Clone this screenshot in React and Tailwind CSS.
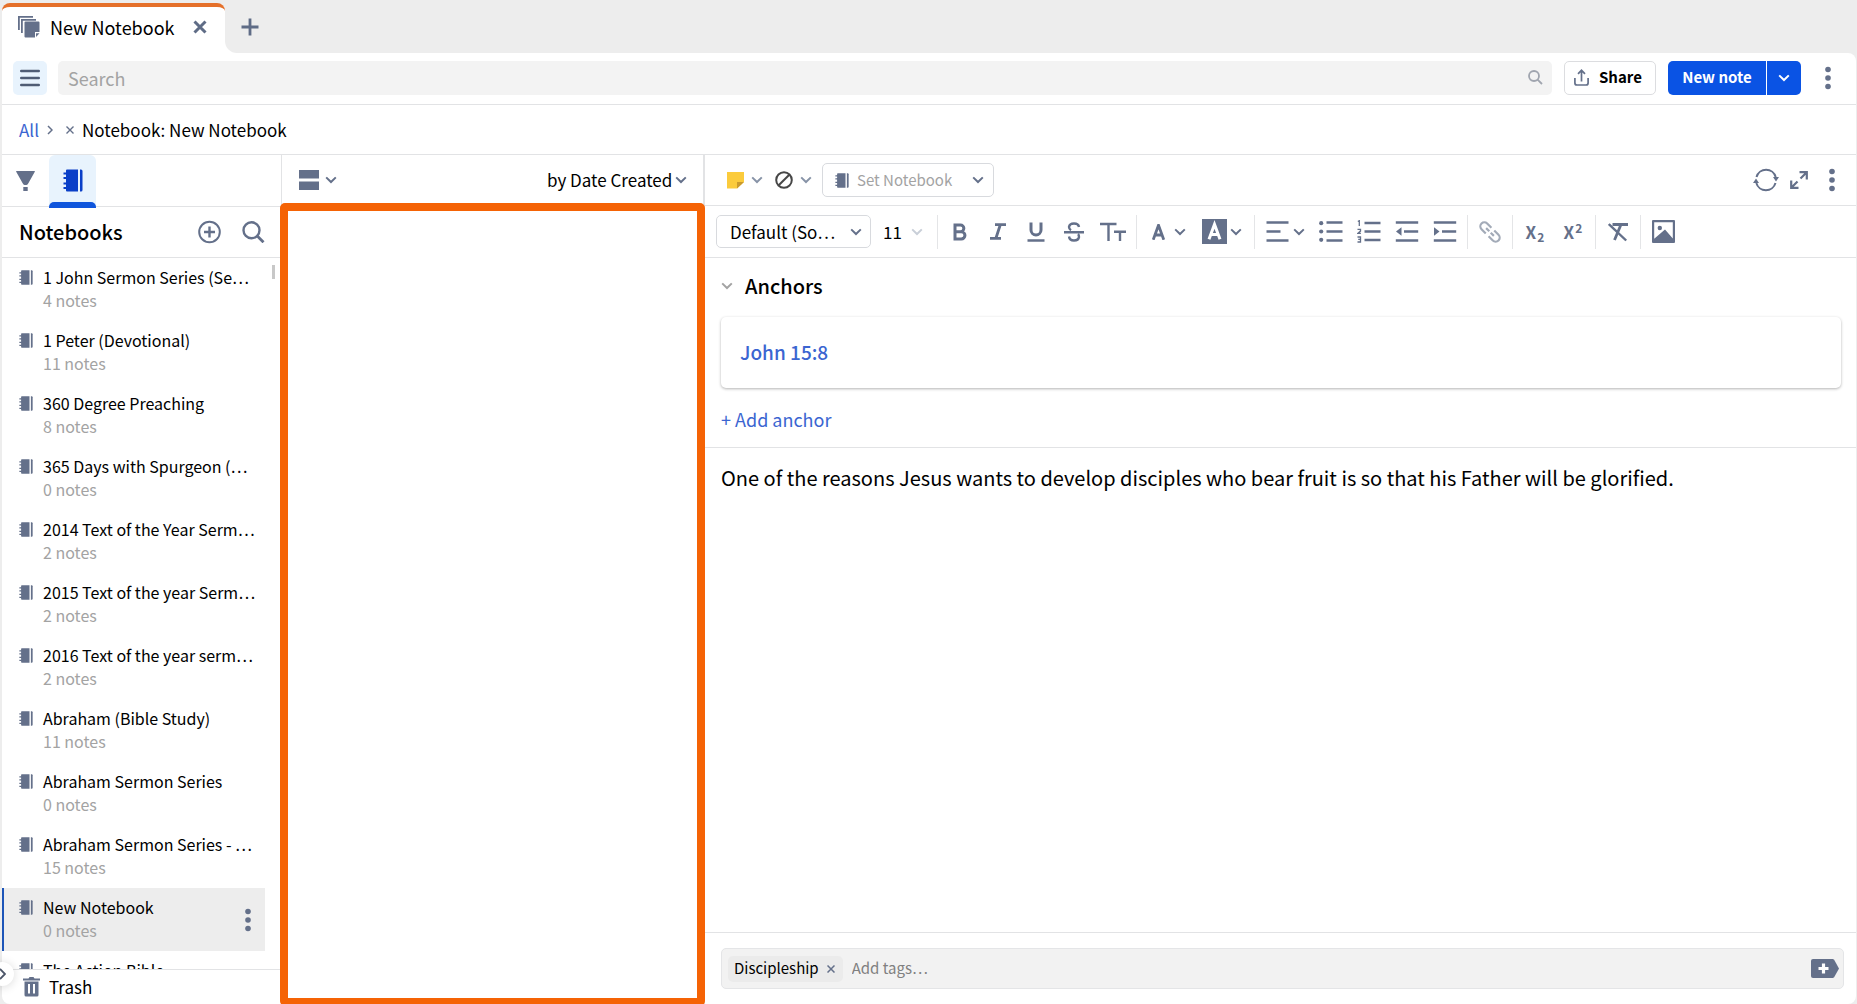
import React from "react";

const NOTEBOOKS = [
  { name: "1 John Sermon Series (Se…", count: "4 notes" },
  { name: "1 Peter (Devotional)", count: "11 notes" },
  { name: "360 Degree Preaching", count: "8 notes" },
  { name: "365 Days with Spurgeon (…", count: "0 notes" },
  { name: "2014 Text of the Year Serm…", count: "2 notes" },
  { name: "2015 Text of the year Serm…", count: "2 notes" },
  { name: "2016 Text of the year serm…", count: "2 notes" },
  { name: "Abraham (Bible Study)", count: "11 notes" },
  { name: "Abraham Sermon Series", count: "0 notes" },
  { name: "Abraham Sermon Series - …", count: "15 notes" },
  { name: "New Notebook", count: "0 notes", selected: true },
  { name: "The Action Bible" },
];

function Chevron({ className = "text-[#64708a]" }) {
  return (
    <svg width="12" height="8" viewBox="0 0 12 8" fill="none" stroke="currentColor" strokeWidth="2" className={"shrink-0 " + className} aria-hidden="true">
      <path d="M1.2 1.4 6 6l4.800-4.600" />
    </svg>
  );
}

function Dots() {
  return (
    <svg width="6" height="24" viewBox="0 0 6 24" fill="#64708a" aria-hidden="true">
      <circle cx="3" cy="3.500" r="2.800" />
      <circle cx="3" cy="12" r="2.800" />
      <circle cx="3" cy="20.500" r="2.800" />
    </svg>
  );
}

function NotebookIcon({ className = "w-[14px] h-[15px] text-[#64708a]" }) {
  return (
    <svg viewBox="0 0 20 23" preserveAspectRatio="none" className={"shrink-0 " + className} fill="currentColor" aria-hidden="true">
      <path d="M3 1.500Q3 .5 4 .5H15V22.500H4Q3 22.500 3 21.500V20H.5V18H3V15.500H.5V13.500H3V10H.5V8H3V5.500H.5V3.500H3Z" />
      <path d="M17 .5h1q1.500 0 1.500 1.500v19q0 1.500-1.500 1.500h-1Z" />
    </svg>
  );
}

function Divider() {
  return <span className="mx-[3px] h-[34px] w-px shrink-0 bg-[#e4e5e7]" />;
}

function Tool({ label, className = "w-[38px]", children }) {
  return (
    <button type="button" aria-label={label} className={"flex h-[34px] shrink-0 items-center justify-center text-[#64708a] " + className}>
      {children}
    </button>
  );
}

function Icon({ children, w = 24, h = 24 }) {
  return (
    <svg width={w} height={h} viewBox={`0 0 ${w} ${h}`} fill="none" stroke="currentColor" strokeWidth="2.400" aria-hidden="true">
      {children}
    </svg>
  );
}

function TabBar() {
  return (
    <div className="flex h-[53px] shrink-0 bg-[#ededed] pt-[3px]">
      <div className="flex w-[223px] shrink-0 items-center rounded-t-[8px] border-t-4 border-[#e5702a] bg-white pb-[6px] pl-4">
        <svg width="22" height="22" viewBox="0 0 22 22" fill="#64708a" aria-hidden="true">
          <path d="M0 0h15v1.800H1.800V14H0Z" />
          <path d="M3 3h15v1.800H4.800V17H3Z" />
          <path d="M6.500 6.500q0-1 1-1H20.500q1 0 1 1V16h-4.500v5.500H7.500q-1 0-1-1Z" />
          <path d="M18 17.200h3.500L18 21Z" />
        </svg>
        <span className="ml-[10px] text-[18px] leading-6 text-black">New Notebook</span>
        <button type="button" aria-label="Close tab" className="ml-[18px] flex text-[#5f6c86]">
          <Icon w={14} h={14}><path strokeWidth="3" d="m1.500 1.500 11 11m0-11-11 11" /></Icon>
        </button>
      </div>
      <div className="-mt-[3px] flex flex-1 bg-white">
        <div className="flex flex-1 items-center rounded-bl-[12px] bg-[#ededed] pl-4">
          <button type="button" aria-label="New tab" className="text-[#5f6c86]">
            <Icon w={18} h={18}><path strokeWidth="2.800" d="M9 .5v17M.5 9h17" /></Icon>
          </button>
        </div>
      </div>
    </div>
  );
}

function TopBar() {
  return (
    <div className="flex h-[52px] shrink-0 items-center rounded-tr-[8px] border-b border-[#e2e3e5] bg-white pb-[2px] pl-[11px] pr-[25px]">
      <button type="button" aria-label="Menu" className="flex size-[34px] items-center justify-center rounded-[5px] bg-[#e8f3fd] text-[#4f5c74]">
        <Icon w={20} h={18}><path strokeLinecap="round" d="M1.200 2h17.600M1.200 9h17.600M1.200 16h17.600" /></Icon>
      </button>
      <div className="ml-[11px] flex h-[34px] flex-1 items-center rounded-[5px] bg-[#f3f3f3] pl-[10px] pr-[9px]">
        <input aria-label="Search" placeholder="Search" className="h-full min-w-0 flex-1 bg-transparent text-[18px] text-black outline-none placeholder:text-[#a3a3a3]" />
        <svg width="15" height="15" viewBox="0 0 15 15" fill="none" stroke="#a0a5af" strokeWidth="1.800" aria-hidden="true">
          <circle cx="6" cy="6" r="5" /><path d="m9.600 9.600 4.400 4.400" />
        </svg>
      </div>
      <button type="button" className="ml-3 flex h-[34px] w-[92px] items-center rounded-[5px] border border-[#dcdde0] pl-[9px] text-[15px] font-bold text-black">
        <svg width="15" height="17" viewBox="0 0 15 17" fill="none" stroke="#64708a" strokeWidth="1.700" aria-hidden="true">
          <path d="M7.500 12.500V1.500M4 4.800l3.500-3.500L11 4.800M.9 9v5q0 2 2 2h9.200q2 0 2-2V9" />
        </svg>
        <span className="ml-[10px]">Share</span>
      </button>
      <button type="button" className="ml-3 h-[34px] w-[98px] rounded-l-[5px] bg-[#0a53e4] text-[15px] font-bold text-white">New note</button>
      <button type="button" aria-label="More note types" className="ml-px flex h-[34px] w-[34px] items-center justify-center rounded-r-[5px] bg-[#0a53e4]">
        <Chevron className="text-white" />
      </button>
      <button type="button" aria-label="More options" className="ml-6"><Dots /></button>
    </div>
  );
}

function Breadcrumb() {
  return (
    <nav className="flex h-[50px] shrink-0 items-center border-b border-[#e2e3e5] bg-white pl-[17px] text-[17px]">
      <a href="#all" className="text-[#3b65d1]">All</a>
      <svg width="6" height="10" viewBox="0 0 6 10" fill="none" stroke="#64708a" strokeWidth="1.500" className="ml-2" aria-hidden="true"><path d="m1 1 4 4-4 4" /></svg>
      <button type="button" aria-label="Remove filter" className="ml-[13px]">
        <svg width="8" height="8" viewBox="0 0 8 8" fill="none" stroke="#64708a" strokeWidth="1.400" aria-hidden="true"><path d="m.5.5 7 7m0-7-7 7" /></svg>
      </button>
      <span className="ml-2 text-black">Notebook: New Notebook</span>
    </nav>
  );
}

function Sidebar() {
  return (
    <aside className="flex w-[280px] shrink-0 flex-col border-r border-[#e2e3e5]">
      <div className="flex h-[52px] shrink-0 border-b border-[#e2e3e5]">
        <button type="button" aria-label="Filters" className="flex w-[47px] items-center pl-[14px]">
          <svg width="19" height="20" viewBox="0 0 19 20" fill="#64708a" aria-hidden="true">
            <path d="M.6 0h17.800q.8 0 .4.800L12.500 12q-1 2-2 2h-2q-1 0-2-2L.2.800Q-.2 0 .6 0Z" /><rect x="7.300" y="16" width="4.400" height="4" />
          </svg>
        </button>
        <button type="button" aria-label="Notebooks" className="relative flex h-[53px] w-[47px] items-center justify-center rounded-t-[6px] bg-[#e8f3fd]">
          <NotebookIcon className="mb-[2px] h-[23px] w-[20px] text-[#0a3fc8]" />
          <span className="absolute inset-x-0 bottom-0 h-[6px] rounded-t-[5px] bg-[#0f55dc]" />
        </button>
      </div>
      <div className="flex h-[51px] shrink-0 items-center border-b border-[#e2e3e5] pl-[17px] pr-4">
        <h2 className="flex-1 text-[20px] font-medium text-black">Notebooks</h2>
        <button type="button" aria-label="Add notebook" className="text-[#64708a]">
          <Icon w={23} h={24}><circle cx="11.500" cy="12" r="10.300" strokeWidth="2" /><path d="M11.500 6.500v11M6 12h11" /></Icon>
        </button>
        <button type="button" aria-label="Search notebooks" className="ml-[21px] text-[#64708a]">
          <Icon w={23} h={22}><circle cx="9.500" cy="9.300" r="8" /><path d="m15.300 15.100 6.200 6.200" strokeWidth="2.800" /></Icon>
        </button>
      </div>
      <div className="flex min-h-0 flex-1 overflow-hidden">
        <ul className="min-w-0 flex-1">
          {NOTEBOOKS.map((n) => (
            <li key={n.name} className={"flex h-[63px] items-start " + (n.selected ? "border-l-2 border-[#1d55b8] bg-[#ededed] pl-[15px]" : "pl-[17px]")}>
              <NotebookIcon className="mt-3 h-[15px] w-[14px] text-[#64708a]" />
              <a href="#notebook" className="ml-[10px] mt-[7px] block min-w-0 flex-1">
                <span className="block whitespace-nowrap text-[16px] leading-6 text-black">{n.name}</span>
                <span className="block text-[16px] leading-[23px] text-[#a3a3a3]">{n.count}</span>
              </a>
              {n.selected && (
                <button type="button" aria-label="Notebook options" className="mr-[14px] self-center"><Dots /></button>
              )}
            </li>
          ))}
        </ul>
        <div className="w-[16px] shrink-0 pl-[7px] pt-[7px]"><div className="h-[14px] w-[3px] bg-[#c8c8c8]" /></div>
      </div>
      <a href="#trash" className="flex h-[35px] shrink-0 items-center border-t border-[#e2e3e5] pl-[21px] text-[17px] text-black">
        <svg width="17" height="20" viewBox="0 0 17 20" fill="#64708a" aria-hidden="true">
          <path fillRule="evenodd" d="M0 2.500V1.500h5.500L6.500 0h4l1 1.500H17v2H0ZM1.500 4.500h14V18q0 1.500-1.500 1.500H3Q1.500 19.500 1.500 18ZM5 7v9.500h2V7ZM10 7v9.500h2V7Z" />
        </svg>
        <span className="ml-[9px]">Trash</span>
      </a>
    </aside>
  );
}

function ResultsColumn() {
  return (
    <section className="relative flex w-[423px] shrink-0 flex-col border-r-2 border-[#e2e3e5]">
      <div className="flex h-[49px] shrink-0 items-center pl-[17px] pr-4">
        <button type="button" aria-label="View" className="flex items-center gap-[6px]">
          <svg width="20" height="20" viewBox="0 0 20 20" fill="#64708a" aria-hidden="true"><path d="M0 0h20v8.500H0zM0 11.500h20V20H0z" /></svg>
          <Chevron />
        </button>
        <div className="relative ml-auto flex items-center">
          <select aria-label="Sort order" className="appearance-none bg-transparent pr-[14px] text-[17px] text-black outline-none">
            <option>by Date Created</option>
          </select>
          <span className="pointer-events-none absolute right-0"><Chevron /></span>
        </div>
      </div>
      <div className="absolute -bottom-[2px] -left-[2px] -right-[2px] top-12 rounded-[5px] border-8 border-[#f56305] bg-white" />
    </section>
  );
}

function NoteBar() {
  return (
    <div className="flex h-[51px] shrink-0 items-center border-b border-[#e2e3e5] pl-[22px] pr-[21px]">
      <button type="button" aria-label="Note style" className="flex items-center gap-[7px]">
        <svg width="17" height="17" viewBox="0 0 17 17" aria-hidden="true">
          <path d="M0 0h17v10l-7 6.500H0Z" fill="#fbcb3c" /><path d="M10 10h7l-7 6.500Z" fill="#c99a2e" />
        </svg>
        <Chevron className="text-[#8793a7]" />
      </button>
      <button type="button" aria-label="Highlight" className="ml-3 flex items-center gap-[7px] text-[#474747]">
        <Icon w={18} h={18}><circle cx="9" cy="9" r="7.800" strokeWidth="2" /><path d="m3.700 14.300 10.600-10.600" strokeWidth="2" /></Icon>
        <Chevron className="text-[#8793a7]" />
      </button>
      <div className="relative ml-[10px] flex h-[34px] w-[172px] items-center">
        <span className="pointer-events-none absolute left-[13px]"><NotebookIcon /></span>
        <select aria-label="Set Notebook" className="h-full w-full appearance-none rounded-[5px] border border-[#d8dade] bg-transparent pl-[34px] text-[15px] text-[#a3a3a3] outline-none">
          <option>Set Notebook</option>
        </select>
        <span className="pointer-events-none absolute right-[10px] flex"><Chevron /></span>
      </div>
      <button type="button" aria-label="Sync" className="ml-auto text-[#64708a]">
        <Icon w={26} h={24}>
          <path strokeWidth="2" d="M3.500 9A10 10 0 0 1 22.700 9M22.500 15A10 10 0 0 1 3.300 15" />
          <path stroke="none" fill="currentColor" d="M20 9h6l-3 4.500ZM0 15h6l-3-4.500Z" />
        </Icon>
      </button>
      <button type="button" aria-label="Expand" className="ml-[11px] text-[#64708a]">
        <Icon w={18} h={18}><path d="M9.500 1.200h7.300v7.300M16.500 1.500l-6 6M1.200 9.500v7.300h7.300M1.500 16.500l6-6" strokeWidth="2.200" /></Icon>
      </button>
      <button type="button" aria-label="Note options" className="ml-[21px]"><Dots /></button>
    </div>
  );
}

function FormatBar() {
  return (
    <div className="flex h-[52px] shrink-0 items-center border-b border-[#e2e3e5] pl-[11px]">
      <div className="relative flex h-[33px] w-[155px] shrink-0 items-center">
        <select aria-label="Font" className="h-full w-full appearance-none rounded-[5px] border border-[#d8dade] bg-transparent pl-[13px] text-[17px] text-black outline-none">
          <option>Default (So…</option>
        </select>
        <span className="pointer-events-none absolute right-[9px] flex"><Chevron /></span>
      </div>
      <div className="relative ml-3 flex h-[33px] w-[40px] shrink-0 items-center">
        <select aria-label="Font size" className="h-full w-full appearance-none bg-transparent text-[17px] text-black outline-none"><option>11</option></select>
        <span className="pointer-events-none absolute right-0 flex"><Chevron className="text-[#c9cfd8]" /></span>
      </div>
      <span className="w-[11px]" />
      <Divider />
      <Tool label="Bold"><Icon w={14} h={18}><path strokeWidth="3" d="M2 2h5.500a3.300 3.300 0 0 1 0 6.700H2M2 8.700h6.300a3.600 3.600 0 0 1 0 7.300H2V.5" /></Icon></Tool>
      <Tool label="Italic"><Icon w={16} h={17}><path strokeWidth="2.800" d="M5 1.700h11M0 15.300h11M10.200 2 6 15" /></Icon></Tool>
      <Tool label="Underline"><Icon w={18} h={20}><path strokeWidth="3" d="M4 .5v7.500a5 5 0 0 0 10 0V.5" /><path d="M.5 18.500h17" /></Icon></Tool>
      <Tool label="Strikethrough"><Icon w={20} h={20}><path d="M15 5Q14.500 1.500 10 1.500T5 5q0 2 2 3.200M5 14.500q.5 4 5 4t5-3.500q0-1.800-1-2.800M0 10.200h20" /></Icon></Tool>
      <Tool label="Text size" className="w-10"><Icon w={26} h={20}><path d="M0 2h16.500M8.500 2v17M14 9.700h12M20 9.700V19" /></Icon></Tool>
      <Divider />
      <Tool label="Text color" className="w-[57px] gap-[9px]"><Icon w={13} h={16}><path strokeWidth="2.800" d="M1.200 15.800 6.500 1.200l5.300 14.600M3 11h7" /></Icon><Chevron /></Tool>
      <Tool label="Highlight color" className="mr-[5px] w-[49px] gap-[3px]">
        <svg width="25" height="25" viewBox="0 0 25 25" aria-hidden="true"><path fill="#64708a" d="M0 0h25v25H0z" /><path fill="none" stroke="#fff" strokeWidth="3" d="m7 20.200 5.500-14.800L18 20.200M9 15.500h7" /></svg>
        <Chevron />
      </Tool>
      <Divider />
      <Tool label="Alignment" className="w-[54px] gap-1"><Icon w={23} h={21}><path d="M.5 1.500h22M.5 10.500h14M.5 19.500h22" /></Icon><Chevron /></Tool>
      <Tool label="Bulleted list"><Icon w={24} h={21}><path d="M7.500 1.500H23.500M7.500 10.500H23.500M7.500 19.500H23.500" /><g fill="currentColor" stroke="none"><circle cx="2.200" cy="2.200" r="2.100" /><circle cx="2.200" cy="10.500" r="2.100" /><circle cx="2.200" cy="18.800" r="2.100" /></g></Icon></Tool>
      <Tool label="Numbered list"><Icon w={24} h={23}><path d="M7.500 3H23.500M7.500 11.500H23.500M7.500 20H23.500" /><path strokeWidth="1.300" d="M.8 1.500l1.500-.8V6M.5 9.300h3v1.800l-2.600 2.300h3M.5 17h3v5h-3M1.200 19.400h2.300" /></Icon></Tool>
      <Tool label="Decrease indent"><Icon w={24} h={21}><path d="M.8 1.500h22.400M9 10.500h14.200M.8 19.500h22.400" /><path stroke="none" fill="currentColor" d="M6.500 6.300v8.400L1 10.500Z" /></Icon></Tool>
      <Tool label="Increase indent"><Icon w={24} h={21}><path d="M.8 1.500h22.400M9 10.500h14.200M.8 19.500h22.400" /><path stroke="none" fill="currentColor" d="M1 6.300v8.400l5.500-4.200Z" /></Icon></Tool>
      <Divider />
      <Tool label="Link">
        <svg width="24" height="24" viewBox="0 0 24 24" fill="none" stroke="#a3abb8" strokeWidth="2.200" aria-hidden="true">
          <g transform="rotate(45 12 12)"><path d="M10 16H4a4 4 0 0 1 0-8h6M14 8h6a4 4 0 0 1 0 8h-6" /><path d="M6.500 12H11M13 12h4.500" /></g>
        </svg>
      </Tool>
      <Divider />
      <Tool label="Subscript"><span className="text-[17px] font-bold leading-6">X<sub className="ml-px text-[12px]">2</sub></span></Tool>
      <Tool label="Superscript"><span className="text-[17px] font-bold leading-6">X<sup className="ml-px text-[12px]">2</sup></span></Tool>
      <Divider />
      <Tool label="Clear formatting"><Icon w={20} h={20}><path strokeWidth="2.800" d="M4.500 2.500H20M13 2.500 6.500 18" /><path strokeWidth="2.400" d="m.8 2 17.400 16.500" /></Icon></Tool>
      <Divider />
      <Tool label="Insert image">
        <svg width="23" height="23" viewBox="0 0 23 23" fill="#64708a" aria-hidden="true">
          <path fillRule="evenodd" d="M1 0h21q1 0 1 1v21q0 1-1 1H1q-1 0-1-1V1q0-1 1-1ZM2.200 2.200v16.500L13 9.500l7.800 9V2.200Z" /><circle cx="7.800" cy="8" r="2.200" />
        </svg>
      </Tool>
    </div>
  );
}

function Editor() {
  return (
    <main className="flex min-w-0 flex-1 flex-col">
      <NoteBar />
      <FormatBar />
      <section className="shrink-0 border-b border-[#e2e3e5] pb-[14px] pl-4 pr-[15px] pt-[14px]">
        <button type="button" className="flex h-7 items-center text-[20px] font-medium text-black">
          <Chevron className="text-[#a3a3a3]" /><span className="ml-3">Anchors</span>
        </button>
        <div className="mt-[17px] flex h-[71px] items-center rounded-[5px] pl-[19px] shadow-[0_1px_3px_rgba(0,0,0,0.3)]">
          <a href="#john-15-8" className="text-[19px] font-medium text-[#3b65d1]">John 15:8</a>
        </div>
        <button type="button" className="mt-[17px] block h-7 text-[18px] leading-7 text-[#3b65d1]">+ Add anchor</button>
      </section>
      <textarea aria-label="Note text" className="min-h-0 flex-1 resize-none bg-transparent px-4 pt-[15px] text-[20px] leading-[30px] text-black outline-none" defaultValue="One of the reasons Jesus wants to develop disciples who bear fruit is so that his Father will be glorified." />
      <div className="shrink-0 border-t border-[#e2e3e5] pb-[15px] pl-4 pr-[12px] pt-[15px]">
        <div className="flex h-[41px] items-center rounded-[5px] border border-[#e4e5e7] bg-[#f2f2f2] pl-[6px] pr-1 text-[15px]">
          <span className="flex h-[26px] items-center rounded-[5px] bg-[#ebebeb] pl-[6px] pr-2 text-black">
            Discipleship
            <button type="button" aria-label="Remove tag" className="ml-2">
              <svg width="8" height="8" viewBox="0 0 8 8" fill="none" stroke="#64708a" strokeWidth="1.500" aria-hidden="true"><path d="m.5.5 7 7m0-7-7 7" /></svg>
            </button>
          </span>
          <input aria-label="Add tags" placeholder="Add tags…" className="ml-[9px] min-w-0 flex-1 bg-transparent outline-none placeholder:text-[#808080]" />
          <button type="button" aria-label="Add tag">
            <svg width="28" height="19" viewBox="0 0 28 19" aria-hidden="true"><path d="M2 0h19.500q1 0 1.600.8L28 9.500l-4.900 8.700q-.6.800-1.600.8H2q-2 0-2-2V2q0-2 2-2Z" fill="#64708a" /><path d="M12.500 4.500v10M7.500 9.500h10" stroke="#fff" strokeWidth="3.200" /></svg>
          </button>
        </div>
      </div>
    </main>
  );
}

export default function App() {
  return (
    <div className="relative flex h-screen flex-col overflow-hidden bg-[#ededed] pl-[2px] pr-px font-['Noto_Sans_CJK_SC','Noto_Sans',sans-serif]">
      <TabBar />
      <TopBar />
      <Breadcrumb />
      <div className="flex min-h-0 flex-1 overflow-hidden rounded-b-[8px] bg-white">
        <Sidebar />
        <ResultsColumn />
        <Editor />
      </div>
      <button type="button" aria-label="Expand panel" className="absolute -left-[10px] bottom-[18px] flex size-6 items-center justify-end rounded-full bg-white pr-2 shadow-[0_1px_10px_rgba(0,0,0,0.15)]">
        <svg width="7" height="12" viewBox="0 0 7 12" fill="none" stroke="#4b5568" strokeWidth="1.800" aria-hidden="true"><path d="m1 1 5 5-5 5" /></svg>
      </button>
    </div>
  );
}
